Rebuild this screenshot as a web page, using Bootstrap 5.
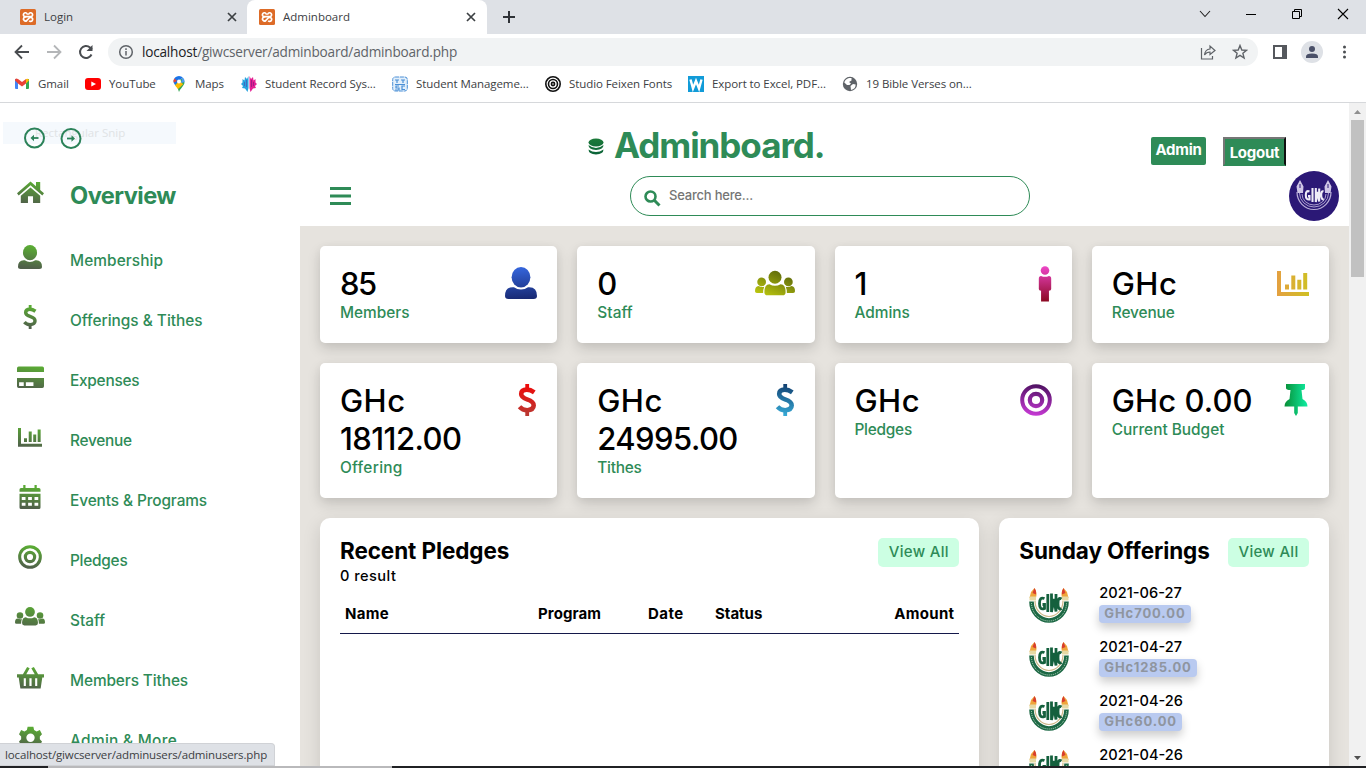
<!DOCTYPE html>
<html lang="en">
<head>
<meta charset="utf-8">
<title>Adminboard</title>
<link rel="stylesheet" href="https://cdn.jsdelivr.net/npm/bootstrap@5.3.0/dist/css/bootstrap.min.css">
<script src="https://cdn.jsdelivr.net/npm/bootstrap@5.3.0/dist/js/bootstrap.bundle.min.js"></script>
<style>
:root{--green:#2e8b57}
html,body{height:100%;overflow:hidden}
body{font-family:Inter,"Liberation Sans",sans-serif;font-weight:500;color:#000;background:#fff;font-size:16px}
svg{display:block;flex:none}
.window{width:1366px;height:768px;overflow:hidden}
.chrome-ui{font-family:"Open Sans","Noto Sans",sans-serif;font-weight:400;font-size:12px;color:#3c4043}
/* tracking */
.t-15n{letter-spacing:-1.5px}
.t-5n{letter-spacing:-.55px}
.t-2n{letter-spacing:-.25px}
.t-1n{letter-spacing:-.1px}
.t-1{letter-spacing:.1px}
.t-3{letter-spacing:.3px}
.t-5{letter-spacing:.45px}
.t-10{letter-spacing:1px}
/* tab strip */
.tabstrip{height:34px;background:#dee1e6}
.tab{height:34px;width:239px;padding:0 9px 0 20px;font-size:11.5px}
.tab.first{width:247px;padding-right:8px}
.tab.current{background:#fff;border-radius:8px 8px 0 0;width:240px;padding-left:12px}
.tab-title{margin-left:8px}
.wincontrols{gap:30px;padding-right:17px;padding-bottom:6px}
.toolbar{height:36px;padding:0 12px 0 13px}
.nav-gap{margin-left:14px}
.omnibox{background:#f1f3f4;height:28px;width:1150px;border-radius:14px;padding:0 10px;margin-left:13px}
.url{font-size:13.600px;color:#202124;margin-left:8px;letter-spacing:-.2px}
.url span{color:#5f6368}
.bookmarks{height:33px;border-bottom:1px solid #d6d8db;padding:0 0 5px 14px;font-size:11.5px;letter-spacing:-.08px}
.bm{gap:8px}
.bm-1{width:71px}.bm-2{width:86px}.bm-3{width:70px}.bm-4{width:151px}.bm-5{width:153px}.bm-6{width:143px}.bm-7{width:154px}
.avatar-dot{width:22px;height:22px;border-radius:50%;background:#dee1e6;margin-left:13px}
/* page */
.viewport{height:663px;overflow:hidden}
.side{width:300px;flex:none;padding-top:18px;color:var(--green)}
.history-row{height:33px;padding-left:23px;gap:15px}
.snip{left:3px;top:19px;width:173px;height:22px;background:#f5f9fd;color:#e0e3e5;font-family:"Open Sans",sans-serif;font-weight:400;font-size:11.5px;line-height:22px;padding-left:32px}
.side-item{height:60px;font-size:15.4px;padding-top:2px}
.side-item.lead-item{margin-bottom:5px;margin-top:11px;font-size:23.6px;font-weight:700}
.side-icon{width:60px;margin-right:10px;padding-bottom:8px}
.main-col{width:1049px;flex:none;background:#e6e3de}
.head{height:123px;background:#fff}
.brand{height:73px;padding:10px 0 0 288px}
.brand-icon{margin-top:3px}
.brand h1{font-size:35px;font-weight:700;color:var(--green);margin:0 0 0 10px;line-height:60px;width:211px;letter-spacing:-1.050px;white-space:nowrap}
.hbtn{color:#fff;background:var(--green);font-weight:700;font-size:15px;line-height:1;letter-spacing:-.25px}
.hbtn-a{margin-left:326px;width:55px;height:28px;border-radius:2px;padding-top:5px;margin-top:12px}
.hbtn-l{margin-left:17px;width:63px;height:29px;border:2px solid;border-color:#767676 #101010 #2e8b57 #767676;margin-top:14px;padding-top:6px}
.searchrow{height:50px;padding:0 10px 10px 30px}
.searchbox{width:400px;height:40px;border:1px solid var(--green);border-radius:20px;padding-left:13px;font-size:13px;color:#757575;margin-left:279px;letter-spacing:-.2px}
.content{padding:20px}
.cards{display:grid;grid-template-columns:repeat(4,1fr);gap:20px}
.stat{background:#fff;border-radius:5px;padding:20px;box-shadow:0 6px 14px rgba(0,0,0,.14),0 1px 8px rgba(0,0,0,.04)}
.stat.s1{height:97px}.stat.s2{height:135px}
.stat>svg{margin-top:1px}
.stat .i-person{margin-right:-11px;margin-top:0}
.stat .i-dollar{margin-right:-6px}
.stat .i-pin{margin-right:-3px}
.num{font-size:31px;line-height:38px;margin-top:-1px}
.cap{font-size:15.4px;line-height:18px;color:var(--green);padding-top:1px}
.panels{display:grid;grid-template-columns:2fr 1fr;gap:20px;margin-top:20px}
.panel{background:#fff;border-radius:10px;height:400px;padding:20px;box-shadow:0 6px 18px rgba(0,0,0,.13)}
.panel h2{font-size:22.5px;font-weight:700;line-height:26px;height:28px;margin:0;letter-spacing:-.1px}
.viewall{background:#ccffe3;color:var(--green);border-radius:5px;width:81px;height:29px;line-height:27px;text-align:center;font-size:15px;letter-spacing:.3px}
.ptable{font-size:15px;font-weight:700;border-bottom:1px solid #14184a;height:39px;margin-top:10px;padding:0 5px;line-height:38px}
.c-name{width:193px}.c-prog{width:110px}.c-date{width:67px}
.offers{margin-top:17px}
.offer{height:54px}
.offer .logo{width:60px;margin-right:20px;padding:4px 0 0 10px}
.odate{font-size:14.6px;line-height:18px}
.oamt{background:#b9caf0;color:#8f959f;font-weight:700;font-size:13px;letter-spacing:.9px;line-height:17px;height:18px;border-radius:4px;padding:0 5px;box-shadow:0 5px 10px rgba(0,0,0,.2);margin-top:3px;width:max-content}
.sbar{width:17px;background:#f1f1f1}
.thumb{width:13px;height:157px;background:#c1c1c1;margin:3px 2px 0 2px}
.status{left:0;bottom:2px;width:275px;height:23px;background:#dee1e6;border:1px solid #d0d2d6;border-left:0;border-radius:0 4px 0 0;line-height:22px;padding-left:5px;font-size:11.5px;letter-spacing:-.14px;white-space:nowrap}
.taskline{height:2px;background:linear-gradient(90deg,#202124 48px,#b9b9bb 48px 392px,#202124 392px)}
</style>
</head>
<body>
<svg width="0" height="0" class="position-absolute">
<defs>
<linearGradient id="gGreen" gradientUnits="userSpaceOnUse" x1="16" y1="2" x2="12" y2="30"><stop stop-color="#5aab34"/><stop offset="1" stop-color="#50604a"/></linearGradient>
<linearGradient id="gBlue" gradientUnits="userSpaceOnUse" x1="16" y1="0" x2="18" y2="32"><stop stop-color="#3566dd"/><stop offset="1" stop-color="#182973"/></linearGradient>
<linearGradient id="gOlive" gradientUnits="userSpaceOnUse" x1="22" y1="4" x2="12" y2="28"><stop stop-color="#55610a"/><stop offset="1" stop-color="#bcc70f"/></linearGradient>
<linearGradient id="gPink" gradientUnits="userSpaceOnUse" x1="16" y1="0" x2="16" y2="32"><stop stop-color="#ee46c8"/><stop offset="1" stop-color="#8a0820"/></linearGradient>
<linearGradient id="gGold" gradientUnits="userSpaceOnUse" x1="0" y1="0" x2="32" y2="0"><stop stop-color="#e4a040"/><stop offset="1" stop-color="#cfc024"/></linearGradient>
<linearGradient id="gRed" gradientUnits="userSpaceOnUse" x1="16" y1="0" x2="16" y2="32"><stop stop-color="#f00808"/><stop offset="1" stop-color="#b83a34"/></linearGradient>
<linearGradient id="gSky" gradientUnits="userSpaceOnUse" x1="18" y1="0" x2="14" y2="32"><stop stop-color="#123f70"/><stop offset="1" stop-color="#38acd8"/></linearGradient>
<linearGradient id="gPurple" gradientUnits="userSpaceOnUse" x1="18" y1="0" x2="14" y2="32"><stop stop-color="#4d1160"/><stop offset="1" stop-color="#c83ad6"/></linearGradient>
<linearGradient id="gMint" gradientUnits="userSpaceOnUse" x1="5" y1="0" x2="27" y2="0"><stop stop-color="#089038"/><stop offset="1" stop-color="#0eeba0"/></linearGradient>
<linearGradient id="gDb" gradientUnits="userSpaceOnUse" x1="16" y1="0" x2="16" y2="32"><stop stop-color="#1c7a3a"/><stop offset="1" stop-color="#0b6338"/></linearGradient>
<symbol id="user" viewBox="0 0 32 32"><ellipse cx="16" cy="10.2" rx="9.4" ry="10.2"/><path d="M9 20.300Q12 22.600 16 22.600T23 20.300Q32 19.500 32 29Q32 32 28.500 32H3.500Q0 32 0 29Q0 19.500 9 20.300Z"/></symbol>
<symbol id="users" viewBox="0 0 32 32"><circle cx="16" cy="10.600" r="5.200"/><path d="M11.500 16.200q4.500 2.500 9 0q4 .2 4 6.300q0 2.500-2.500 2.500H10q-2.500 0-2.500-2.500q0-6.100 4-6.300Z"/><circle cx="5.300" cy="14.300" r="3.500"/><circle cx="26.700" cy="14.300" r="3.500"/><path d="M2.800 17.600q2.200 1.200 4.600.6q-.9 2-.9 5H1.500Q0 23.200 0 21.800q0-4 2.800-4.200ZM29.200 17.600q-2.200 1.200-4.600.6q.9 2 .9 5h5q1.500 0 1.500-1.400q0-4-2.800-4.200Z"/></symbol>
<symbol id="dollar" viewBox="0 0 32 32"><path fill="none" stroke-width="4.600" d="M23.300 8.300Q19.500 5.600 15.800 5.600Q10.300 5.600 10.200 10Q10.200 13.300 16 15.300Q22.800 17.500 22.700 21.400Q22.500 26 16.200 26.200Q11.500 26.200 8.500 22.800"/><path stroke="none" d="M14.300 0h3.800v5h-3.800zM14.300 27h3.800v5h-3.800z"/></symbol>
<symbol id="card-i" viewBox="0 0 32 32"><path fill-rule="evenodd" d="M2 3h28q2 0 2 2v4.500H0V5q0-2 2-2ZM0 16.500h32v10q0 2-2 2H2q-2 0-2-2ZM2.500 21.500v4.500h5.500v-4.500ZM10.500 21.500v4.500h9v-4.500Z"/></symbol>
<symbol id="chart" viewBox="0 0 32 32"><path d="M0 4h4v21h28v4H0ZM8 17.500h4v5H8ZM14.300 8.500h4v14h-4ZM20.300 12.800h4v9.700h-4ZM26.200 6h4v16.500h-4Z"/></symbol>
<symbol id="cal" viewBox="0 0 32 32"><path fill-rule="evenodd" d="M7 0h3v4h12V0h3v4h3q2 0 2 2v3H2V6q0-2 2-2h3ZM2 11.500h28V30q0 2-2 2H4q-2 0-2-2ZM5 16v4h5v-4ZM13.500 16v4h5v-4ZM22 16v4h5v-4ZM5 23.500v4h5v-4ZM13.500 23.500v4h5v-4ZM22 23.500v4h5v-4Z"/></symbol>
<symbol id="target" viewBox="0 0 32 32"><circle cx="16" cy="16" r="13.800" fill="none" stroke-width="4"/><circle cx="16" cy="16" r="6.200" fill="none" stroke-width="4.200"/></symbol>
<symbol id="home" viewBox="0 0 32 32"><path d="M16 3L22.500 8.500V3.500h5V13L32 17L30 19.500L16 7.500L2 19.500L0 17ZM16 10L27.500 19.800V28.500H19V20.500H13V28.500H4.500V19.800Z"/></symbol>
<symbol id="basket" viewBox="0 0 32 32"><path fill-rule="evenodd" d="M0 12H7L12 3.500L15 5L11 12H21L17 5L20 3.500L25 12H32V16H30L28 29H4L2 16H0ZM8 17V26H10.500V17ZM14.700 17V26H17.300V17ZM21.500 17V26H24V17Z"/></symbol>
<symbol id="gear" viewBox="0 0 32 32"><path fill-rule="evenodd" d="M12 1h8l1 4.500 3.500 2 4.500-2 3 6-3 3v4l3 3-3 6-4.500-2-3.500 2L20 32h-8l-1-4.500-3.500-2-4.500 2-3-6 3-3v-4l-3-3 3-6 4.500 2L11 5.500ZM16 10.500A5.800 5.800 0 1 0 16 22.100A5.800 5.800 0 1 0 16 10.500Z"/></symbol>
<symbol id="person" viewBox="0 0 32 32"><circle cx="16" cy="4" r="3.800"/><path d="M12.500 8.800q3.500 1.500 7 0q2 0 2 2.500V20.500q0 1.500-2 1.500V31.500H12.500V22q-2 0-2-1.500V11.300Q10.500 8.800 12.500 8.800Z"/></symbol>
<symbol id="pin" viewBox="0 0 32 32"><path d="M6 0H25V4Q25 6 21.500 6L22.500 15Q27.500 17.500 27.500 22.500H17.800V29L16 32L14.200 29V22.500H4.500Q4.500 17.500 9.500 15L10.500 6Q6 6 6 4Z"/></symbol>
<symbol id="db" viewBox="0 0 32 32"><ellipse cx="16" cy="8" rx="15" ry="8"/><path d="M1 13Q16 25 31 13Q31 22 16 23Q1 22 1 13ZM1 22Q16 32 31 22Q31 31 16 32Q1 31 1 22Z"/></symbol>
<symbol id="xampp" viewBox="0 0 16 16"><rect width="16" height="16" rx="1.500" fill="#dd6b27"/><path d="M6.800 4.300A2 2 0 1 0 5 7.700H11A2 2 0 1 0 9.200 4.300M6.500 8.300A2 2 0 1 0 6.800 11.500L9.200 9A2 2 0 1 1 9.200 11.700M6.500 5L9.500 5" fill="none" stroke="#fff" stroke-width="1.700"/></symbol>
<symbol id="giwc" viewBox="0 0 40 36"><path d="M2.500 13.500A17.500 19 0 0 0 37.500 13.500" fill="none" stroke="#1c6844" stroke-width="4.600"/><path d="M2.500 15A17.500 18 0 0 0 37.500 15" fill="none" stroke="#cfe6d4" stroke-width=".9" stroke-dasharray="1 1"/><path d="M6 13A14 15.500 0 0 0 34 13" fill="none" stroke="#cdb684" stroke-width="1.200"/><path d="M.5 10L2 4L5.500 0Q8.500 4 7 10ZM39.500 10L38 4L34.500 0Q31.500 4 33 10Z" fill="#efa53a"/><path d="M3.500 5L5.500 0Q7.800 3 7 6.500ZM36.500 5L34.500 0Q32.200 3 33 6.500Z" fill="#d83d2e"/><path d="M.5 8.500h6.500v4H.5ZM33 8.500h6.500v4H33Z" fill="#e6d9a4"/><g fill="none" stroke="#14603d" stroke-width="2.800"><path d="M15.500 10.500Q10.500 8.500 10.500 15.500T15.500 20.500V16.500H13.500M18.800 6V24M22.500 5.500V24L25 11L27 23.500V6M32.500 11Q29 8.500 29 15.500T32.500 20.500"/></g></symbol>
</defs></svg>

<div class="window d-flex flex-column position-relative">
<div class="chrome-ui">
 <div class="tabstrip d-flex align-items-center">
  <div class="tab first d-flex align-items-center"><svg width="16" height="16"><use href="#xampp"/></svg><span class="tab-title">Login</span><svg class="ms-auto" width="14" height="14" viewBox="0 0 14 14" stroke="#3c4043" stroke-width="1.700"><path d="M3 3l8 8M11 3l-8 8"/></svg></div>
  <div class="tab current d-flex align-items-center"><svg width="16" height="16"><use href="#xampp"/></svg><span class="tab-title">Adminboard</span><svg class="ms-auto" width="14" height="14" viewBox="0 0 14 14" stroke="#3c4043" stroke-width="1.700"><path d="M3 3l8 8M11 3l-8 8"/></svg></div>
  <svg class="ms-3" width="12" height="12" viewBox="0 0 12 12" stroke="#2f3237" stroke-width="2"><path d="M6 0v12M0 6h12"/></svg>
  <div class="wincontrols d-flex align-items-center ms-auto">
   <svg width="16" height="12" viewBox="0 0 16 12" fill="none" stroke="#222" stroke-width="1.100"><path d="M3 3l5 5.500L13 3"/></svg>
   <svg width="16" height="12" viewBox="0 0 16 12" stroke="#000"><path d="M3 6.500h10"/></svg>
   <svg width="16" height="12" viewBox="0 0 16 12" fill="none" stroke="#000"><path d="M3.500 3.500h7v7h-7zM5.500 3.500v-2h7v7h-2"/></svg>
   <svg width="14" height="12" viewBox="0 0 14 12" stroke="#000" stroke-width="1.100"><path d="M3 1l10 10M13 1L3 11"/></svg>
  </div>
 </div>
 <div class="toolbar d-flex align-items-center">
  <svg width="18" height="16" viewBox="0 0 18 16" fill="none" stroke="#494c50" stroke-width="1.800"><path d="M16 8H3M9 1.500L2.500 8L9 14.500"/></svg>
  <svg class="nav-gap" width="18" height="16" viewBox="0 0 18 16" fill="none" stroke="#b4b6b8" stroke-width="1.800"><path d="M2 8H15M9 1.500L15.500 8L9 14.500"/></svg>
  <svg class="nav-gap" width="18" height="16" viewBox="0 0 18 16" fill="none" stroke="#494c50" stroke-width="2"><path d="M14.500 10.500A6 6 0 1 1 13 3.500L15 5.500"/><path d="M15.500 1v6h-6z" fill="#494c50" stroke="none"/></svg>
  <div class="omnibox d-flex align-items-center">
   <svg width="16" height="16" viewBox="0 0 16 16" fill="none" stroke="#5f6368" stroke-width="1.500"><circle cx="8" cy="8" r="6.300"/><path d="M8 7v4.500M8 4.300v1.600"/></svg>
   <span class="url">localhost<span>/giwcserver/adminboard/adminboard.php</span></span>
   <svg class="ms-auto me-3" width="16" height="16" viewBox="0 0 16 16" fill="none" stroke="#5f6368" stroke-width="1.200"><path d="M1.500 4v11h11V12"/><path d="M4.500 11Q5 5.500 10 5V2L15 6.500L10 10.500V8Q6.500 8 4.500 11Z"/></svg>
   <svg width="16" height="16" viewBox="0 0 16 16" fill="none" stroke="#5f6368" stroke-width="1.400"><path d="M8 1.500L9.800 6L14.500 6.300L10.900 9.300L12.100 14L8 11.400L3.900 14L5.100 9.300L1.500 6.300L6.200 6Z"/></svg>
  </div>
  <svg class="nav-gap" width="16" height="14" viewBox="0 0 16 14"><path d="M1 0h14v14H1ZM3 2v10h7V2Z" fill="#55585d" fill-rule="evenodd"/></svg>
  <div class="avatar-dot d-flex align-items-center justify-content-center"><svg width="12" height="12" viewBox="0 0 12 12" fill="#4a5068"><circle cx="6" cy="3" r="3"/><path d="M0 12V10.500Q0 7.500 6 7.500T12 10.500V12Z"/></svg></div>
  <svg class="ms-auto me-1" width="12" height="14" viewBox="0 0 12 14" fill="#4b4e52"><circle cx="6.500" cy="2" r="1.500"/><circle cx="6.500" cy="7" r="1.500"/><circle cx="6.500" cy="12" r="1.500"/></svg>
 </div>
 <div class="bookmarks d-flex align-items-center">
  <div class="bm bm-1 d-flex align-items-center"><svg width="16" height="16" viewBox="0 0 16 16"><path d="M1 3h3v10H2q-1 0-1-1Z" fill="#4285f4"/><path d="M12 3h3v9q0 1-1 1h-2Z" fill="#34a853"/><path d="M12 3q3-1 3 1.500L12 7.500Z" fill="#fbbc04"/><path d="M1 4.500Q1 1.500 4 3L8 6L12 3V7.500L8 10.500L4 7.500Z" fill="#ea4335"/></svg><span>Gmail</span></div>
  <div class="bm bm-2 d-flex align-items-center"><svg width="16" height="12" viewBox="0 0 16 12"><rect width="16" height="12" rx="3" fill="#f00"/><path d="M6.300 3.400L11 6L6.300 8.600Z" fill="#fff"/></svg><span>YouTube</span></div>
  <div class="bm bm-3 d-flex align-items-center"><svg width="16" height="16" viewBox="0 0 16 16"><path d="M8 16Q7.500 12 4 8.500L11.500 2Q14 4 13.500 7Q13 9 10.500 12Q8.500 14 8 16Z" fill="#34a853"/><path d="M4 9.500L9 3.500L12 8.500L7 13Z" fill="#fbbc04"/><path d="M8 0Q3 .5 2.500 5Q2.500 7 4 9L11.700 1.500Q10.500 0 8 0Z" fill="#1a73e8"/><path d="M3.500 2.500L6 5L2.600 6.500Q2 4 3.500 2.500Z" fill="#ea4335"/><path d="M11.500 1.300Q14 3 13.600 6L10 7Z" fill="#4c9bf5"/><circle cx="8" cy="5.500" r="2" fill="#fff"/></svg><span>Maps</span></div>
  <div class="bm bm-4 d-flex align-items-center"><svg width="16" height="16" viewBox="0 0 16 16"><path d="M7.500 12L6.500 16L4 12.500L1 12L2 10L0 8L1.500 6.500L1.500 3L3.500 4.500L4 1L6 3L7.500 0Z" fill="#27a3df"/><path d="M8.500 12L9.500 16L12 12.500L15 12L14 10L16 8L14.500 6.500L14.500 3L12.500 4.500L12 1L10 3L8.500 0Z" fill="#e41f92"/><path d="M5.500 4V11M3.500 6V10" stroke="#3f6cc0"/><path d="M10.500 4V11M12.500 6V10" stroke="#a01c86"/></svg><span>Student Record Sys...</span></div>
  <div class="bm bm-5 d-flex align-items-center"><svg width="16" height="16" viewBox="0 0 16 16" fill="none" stroke="#4a8fd6"><rect x=".7" y="1" width="14.600" height="14" rx="2.500" fill="#e2effb" stroke-dasharray="4 .7"/><path d="M3 4h4M5 4v3M9 4h4M11 4v3M3 8.500h10M7 10H4v2h3v2H3M13 10h-3v3.500h3" stroke-width="1.200"/></svg><span>Student Manageme...</span></div>
  <div class="bm bm-6 d-flex align-items-center"><svg width="16" height="16" viewBox="0 0 16 16" fill="none" stroke="#111" stroke-width="1.600"><circle cx="8" cy="8" r="7.200"/><circle cx="8" cy="8" r="4.500"/><circle cx="8" cy="8" r="1.600"/></svg><span>Studio Feixen Fonts</span></div>
  <div class="bm bm-7 d-flex align-items-center"><svg width="16" height="16" viewBox="0 0 16 16"><rect width="16" height="16" fill="#119bd8"/><path d="M2.500 3.500L5 12.500L8 5L11 12.500L13.500 3.500" fill="none" stroke="#fff" stroke-width="2.400"/></svg><span>Export to Excel, PDF...</span></div>
  <div class="bm d-flex align-items-center"><svg width="16" height="16" viewBox="0 0 16 16"><circle cx="8" cy="8" r="7.200" fill="#5f6368"/><path d="M7 2Q3 3 2.300 6.500L5 9H7.500L9 7.500L7 6L9.500 4.500V2ZM9 14Q13.500 13 13.700 8.500L11 8L8.500 10Z" fill="#fff"/></svg><span>19 Bible Verses on...</span></div>
 </div>
</div>

<div class="viewport d-flex">
 <aside class="side position-relative">
  <div class="snip position-absolute">Rectangular Snip</div>
  <div class="history-row d-flex align-items-center position-relative">
   <svg width="22" height="22" viewBox="0 0 22 22" fill="none" stroke="#2b8259" stroke-width="2"><circle cx="11.500" cy="11" r="9.500"/><path d="M15.500 11H9" stroke-width="1.800"/><path d="M11 7.800V14.200L7.500 11Z" fill="#2b8259" stroke="none"/></svg>
   <svg width="22" height="22" viewBox="0 0 22 22" fill="none" stroke="#2b8259" stroke-width="2"><circle cx="11" cy="11.500" r="9.500"/><path d="M7 11.500H13" stroke-width="1.800"/><path d="M11.500 8.300V14.700L15 11.500Z" fill="#2b8259" stroke="none"/></svg>
  </div>
  <div class="side-item lead-item d-flex align-items-center"><span class="side-icon"><svg class="mx-auto" width="27" height="27" fill="url(#gGreen)"><use href="#home"/></svg></span><span class="t-5n">Overview</span></div>
  <div class="side-item d-flex align-items-center"><span class="side-icon"><svg class="mx-auto" width="24" height="24" fill="url(#gGreen)"><use href="#user"/></svg></span><span class="t-1">Membership</span></div>
  <div class="side-item d-flex align-items-center"><span class="side-icon"><svg class="mx-auto" width="24" height="24" fill="url(#gGreen)" stroke="url(#gGreen)"><use href="#dollar"/></svg></span><span>Offerings &amp; Tithes</span></div>
  <div class="side-item d-flex align-items-center"><span class="side-icon"><svg class="mx-auto" width="27" height="27" fill="url(#gGreen)"><use href="#card-i"/></svg></span><span class="t-2n">Expenses</span></div>
  <div class="side-item d-flex align-items-center"><span class="side-icon"><svg class="mx-auto" width="24" height="24" fill="url(#gGreen)"><use href="#chart"/></svg></span><span class="t-2n">Revenue</span></div>
  <div class="side-item d-flex align-items-center"><span class="side-icon"><svg class="mx-auto" width="24" height="24" fill="url(#gGreen)"><use href="#cal"/></svg></span><span class="t-1n">Events &amp; Programs</span></div>
  <div class="side-item d-flex align-items-center"><span class="side-icon"><svg class="mx-auto" width="24" height="24" stroke="url(#gGreen)"><use href="#target"/></svg></span><span class="t-2n">Pledges</span></div>
  <div class="side-item d-flex align-items-center"><span class="side-icon"><svg class="mx-auto" width="30" height="30" fill="url(#gGreen)"><use href="#users"/></svg></span><span>Staff</span></div>
  <div class="side-item d-flex align-items-center"><span class="side-icon"><svg class="mx-auto" width="27" height="27" fill="url(#gGreen)"><use href="#basket"/></svg></span><span class="t-1n">Members Tithes</span></div>
  <div class="side-item d-flex align-items-center"><span class="side-icon"><svg class="mx-auto" width="23" height="23" fill="url(#gGreen)"><use href="#gear"/></svg></span><span class="t-3">Admin &amp; More</span></div>
 </aside>
 <main class="main-col">
  <div class="head">
   <div class="brand d-flex align-items-center">
    <svg class="brand-icon" width="16" height="17" fill="url(#gDb)"><use href="#db"/></svg>
    <h1>Adminboard.</h1>
    <div class="hbtn hbtn-a text-center">Admin</div>
    <div class="hbtn hbtn-l text-center">Logout</div>
   </div>
   <div class="searchrow d-flex align-items-center">
    <svg width="21" height="18" viewBox="0 0 21 18" stroke="#2e8b57" stroke-width="3"><path d="M0 1.500h21M0 9h21M0 16.500h21"/></svg>
    <div class="searchbox d-flex align-items-center"><svg class="mt-1" width="17" height="17" viewBox="0 0 17 17" fill="none" stroke="#2e8b57" stroke-width="2.600"><circle cx="6.500" cy="6.500" r="5"/><path d="M10.300 10.300L15.500 15.500" stroke-width="3"/></svg><span class="ms-2">Search here...</span></div>
    <svg class="ms-auto" width="50" height="50" viewBox="0 0 50 50"><circle cx="25" cy="25" r="25" fill="#2b1876"/><g fill="none" stroke="#b9aed8"><path d="M8 21A17 17.500 0 0 0 42 21" stroke-width="1.200"/><path d="M10.500 22A14.500 14 0 0 0 39.500 22" stroke-width=".9"/><path d="M13 23A12 11 0 0 0 37 23" stroke-width=".9"/></g><path d="M11 9L14.500 15.500L14 22H8.500L7.500 15.500ZM39 9L42.500 15.500L41.500 22H36L35.500 15.500Z" fill="#cfc6e6"/><path d="M11 13v4M39 13v4" stroke="#2b1876"/><g fill="none" stroke="#f0edf8" stroke-width="2.100"><path d="M20.500 20.500Q16.800 19 16.800 24T20.500 28.500V25H19M23.500 17V31M26.800 17V31L28.500 21L30.200 30.500V17.500M34.500 20.500Q32.200 19.500 32.200 24T34.800 28.500"/></g></svg>
   </div>
  </div>
  <div class="content">
   <div class="cards">
    <div class="stat s1 d-flex justify-content-between"><div><div class="num"><span class="t-15n">85</span></div><div class="cap">Members</div></div><svg width="32" height="32" fill="url(#gBlue)"><use href="#user"/></svg></div>
    <div class="stat s1 d-flex justify-content-between"><div><div class="num">0</div><div class="cap"><span class="t-1">Staff</span></div></div><svg width="40" height="34" fill="url(#gOlive)"><use href="#users" width="40" height="40" y="-3"/></svg></div>
    <div class="stat s1 d-flex justify-content-between"><div><div class="num">1</div><div class="cap">Admins</div></div><svg class="i-person" width="36" height="36" fill="url(#gPink)"><use href="#person"/></svg></div>
    <div class="stat s1 d-flex justify-content-between"><div><div class="num"><span class="t-5">GHc</span></div><div class="cap"><span class="t-1n">Revenue</span></div></div><svg width="32" height="32" fill="url(#gGold)"><use href="#chart"/></svg></div>
    <div class="stat s2 d-flex justify-content-between"><div><div class="num"><span class="t-5">GHc</span><br><span class="t-5n">18112.00</span></div><div class="cap"><span class="t-3">Offering</span></div></div><svg class="i-dollar" width="32" height="32" fill="url(#gRed)" stroke="url(#gRed)"><use href="#dollar"/></svg></div>
    <div class="stat s2 d-flex justify-content-between"><div><div class="num"><span class="t-5">GHc</span><br><span class="t-5n">24995.00</span></div><div class="cap"><span class="t-2n">Tithes</span></div></div><svg class="i-dollar" width="32" height="32" fill="url(#gSky)" stroke="url(#gSky)"><use href="#dollar"/></svg></div>
    <div class="stat s2 d-flex justify-content-between"><div><div class="num"><span class="t-5">GHc</span></div><div class="cap"><span class="t-2n">Pledges</span></div></div><svg width="32" height="32" stroke="url(#gPurple)"><use href="#target"/></svg></div>
    <div class="stat s2 d-flex justify-content-between"><div><div class="num"><span class="t-1">GHc 0.00</span></div><div class="cap">Current Budget</div></div><svg class="i-pin" width="32" height="32" fill="url(#gMint)"><use href="#pin"/></svg></div>
   </div>
   <div class="panels">
    <section class="panel">
     <div class="d-flex justify-content-between"><h2>Recent Pledges</h2><div class="viewall">View All</div></div>
     <div class="odate"><span class="t-5">0 result</span></div>
     <div class="ptable d-flex"><span class="c-name t-3">Name</span><span class="c-prog t-1">Program</span><span class="c-date t-5">Date</span><span>Status</span><span class="ms-auto t-3">Amount</span></div>
    </section>
    <section class="panel">
     <div class="d-flex justify-content-between"><h2>Sunday Offerings</h2><div class="viewall">View All</div></div>
     <div class="offers">
     <div class="offer d-flex"><div class="logo"><svg width="40" height="36"><use href="#giwc"/></svg></div><div><div class="odate">2021-06-27</div><div class="oamt">GHc700.00</div></div></div>
     <div class="offer d-flex"><div class="logo"><svg width="40" height="36"><use href="#giwc"/></svg></div><div><div class="odate">2021-04-27</div><div class="oamt">GHc1285.00</div></div></div>
     <div class="offer d-flex"><div class="logo"><svg width="40" height="36"><use href="#giwc"/></svg></div><div><div class="odate">2021-04-26</div><div class="oamt">GHc60.00</div></div></div>
     <div class="offer d-flex"><div class="logo"><svg width="40" height="36"><use href="#giwc"/></svg></div><div><div class="odate">2021-04-26</div></div></div>
     </div>
    </section>
   </div>
  </div>
 </main>
 <div class="sbar d-flex flex-column"><svg width="17" height="14" viewBox="0 0 17 14" fill="#8f8f8f"><path d="M8.500 7L12 11H5Z"/></svg><div class="thumb"></div><svg class="mt-auto" width="17" height="17" viewBox="0 0 17 17" fill="#505050"><path d="M8.500 11L12 7H5Z"/></svg></div>
</div>
<div class="status chrome-ui position-absolute">localhost/giwcserver/adminusers/adminusers.php</div>
<div class="taskline"></div>
</div>
</body>
</html>
